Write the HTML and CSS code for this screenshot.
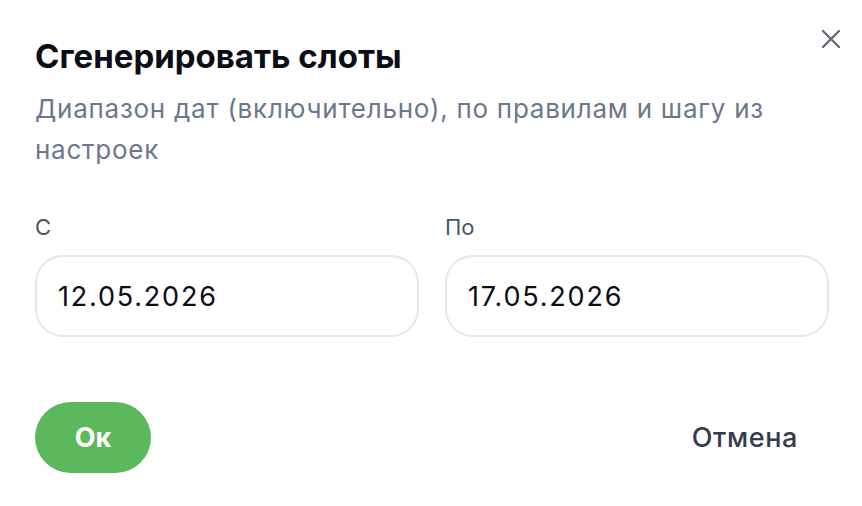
FILE: index.html
```html
<!DOCTYPE html>
<html>
  <head>
    <title>Сгенерировать слоты</title>
    <meta name="viewport" content="width=device-width">
    <link rel="stylesheet" href="styles.css">
  </head>
  <body>
    <div class="dialog">
      <button class="close" aria-label="Закрыть">
        <svg width="20" height="20" viewBox="0 0 20 20">
          <path d="M2 2 L18 18 M18 2 L2 18" stroke="#5f6470" stroke-width="2.2" stroke-linecap="round" fill="none" />
        </svg>
      </button>
      <h2 class="title">Сгенерировать слоты</h2>
      <p class="desc">Диапазон дат (включительно), по правилам и шагу из настроек</p>
      <div class="fields">
        <label class="field">
          <span class="lbl">С</span>
          <input class="inp" type="text" value="12.05.2026" />
        </label>
        <label class="field">
          <span class="lbl">По</span>
          <input class="inp" type="text" value="17.05.2026" />
        </label>
      </div>
      <div class="actions">
        <button class="btn ok">Ок</button>
        <button class="btn cancel">Отмена</button>
      </div>
    </div>
  </body>
</html>
```

FILE: styles.css
```css
* { margin: 0; padding: 0; box-sizing: border-box; }
body {
  font-family: Inter, "Noto Sans", sans-serif;
  background: #fff;
  color: #0b0d17;
}

.dialog {
  position: relative;
  padding: 36px 33px 0 35px;
}

.close {
  position: absolute;
  top: 29px;
  right: 21px;
  border: none;
  background: none;
  display: flex;
}

.title {
  font-size: 33px;
  font-weight: 700;
  line-height: 40px;
}

.desc {
  margin-top: 12px;
  font-size: 26px;
  line-height: 41px;
  letter-spacing: 0.75px;
  color: #6b778c;
  max-width: 770px;
}

.fields {
  display: grid;
  grid-template-columns: 1fr 1fr;
  gap: 26px;
  margin-top: 44px;
}

.field {
  display: flex;
  flex-direction: column;
  min-width: 0;
}

.lbl {
  font-size: 22px;
  line-height: 26px;
  color: #4b5563;
  margin-bottom: 15px;
}

.inp {
  width: 100%;
  height: 82px;
  border: 2px solid #e5e7eb;
  border-radius: 28px;
  padding: 0 21px;
  font-family: Inter, sans-serif;
  font-size: 27px;
  letter-spacing: 1.8px;
  color: #0b0d17;
  outline: none;
}

.actions {
  display: flex;
  justify-content: space-between;
  align-items: center;
  margin-top: 65px;
}

.btn {
  border: none;
  background: none;
  font-family: Inter, sans-serif;
}

.ok {
  width: 116px;
  height: 71px;
  border-radius: 36px;
  background: #5cb85c;
  color: #fff;
  font-size: 27px;
  font-weight: 700;
}

.cancel {
  padding: 0 31px 0 0;
  font-size: 27px;
  font-weight: 500;
  letter-spacing: 0.6px;
  color: #343c4b;
}
```
